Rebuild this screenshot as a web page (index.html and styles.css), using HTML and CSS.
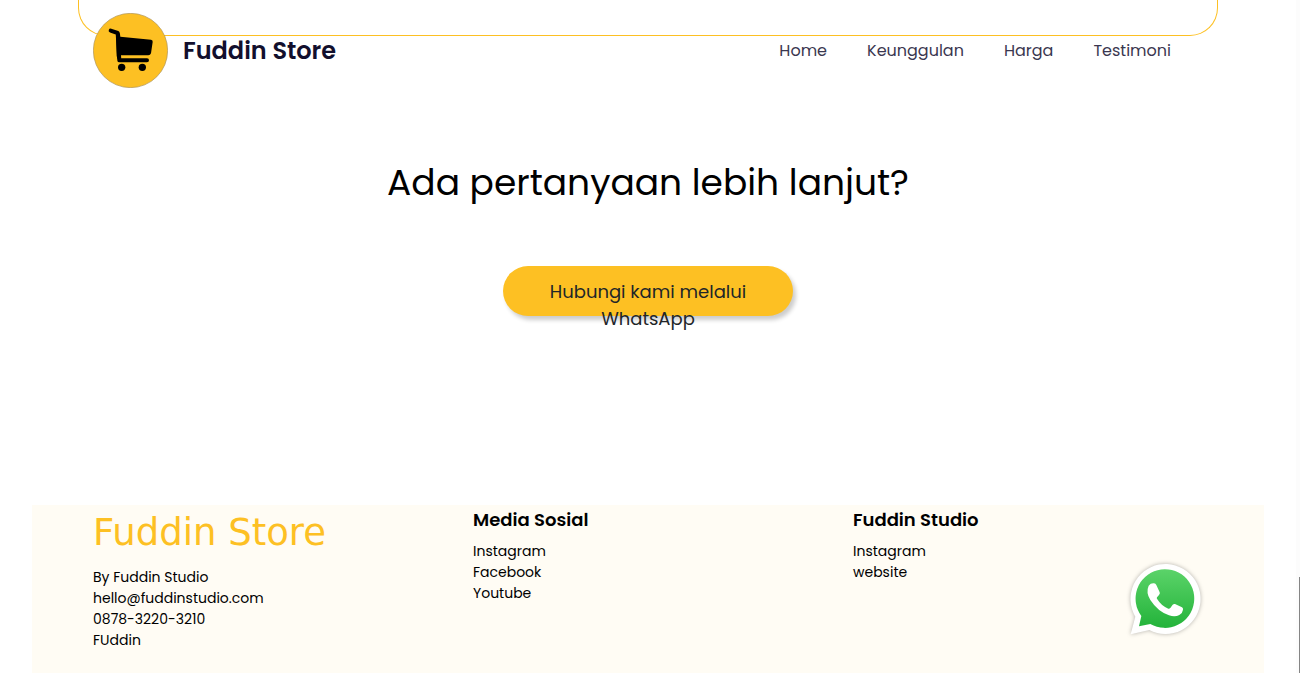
FILE: index.html
```html
<!DOCTYPE html>
<html lang="id">
<head>
<meta charset="utf-8">
<meta name="viewport" content="width=device-width, initial-scale=1">
<title>Fuddin Store</title>
<link rel="stylesheet" href="styles.css">
</head>
<body>
<div class="page">
  <header class="site-header">
    <a class="brand" href="#home">
      <svg class="brand-logo" viewBox="69 39 225 225" aria-hidden="true">
        <circle cx="181.500" cy="151.500" r="111.500" fill="#fdc023" stroke="#a9915a" stroke-width="2"/>
        <path d="M122 92L143 99L148 181H231" fill="none" stroke="#000" stroke-width="12" stroke-linecap="round" stroke-linejoin="round"/>
        <path d="M138 96Q149 94 150 103L151 110L243 119Q249 120 248 126L243 160Q241 166 235 166H153V178H143L140 168Z" fill="#000"/>
        <circle cx="155" cy="202" r="11"/>
        <circle cx="217" cy="202" r="11"/>
      </svg>
      <span class="brand-name">Fuddin Store</span>
    </a>
    <nav class="nav">
      <a href="#home">Home</a>
      <a href="#keunggulan">Keunggulan</a>
      <a href="#harga">Harga</a>
      <a href="#testimoni">Testimoni</a>
    </nav>
  </header>
  <div class="panel-end"></div>
  <main class="contact">
    <h1 class="contact-title">Ada pertanyaan lebih lanjut?</h1>
    <a class="contact-button" href="#whatsapp">Hubungi kami melalui WhatsApp</a>
  </main>
  <footer class="footer">
    <div class="footer-columns">
      <section class="column">
        <h2 class="footer-brand">Fuddin Store</h2>
        <p>By Fuddin Studio</p>
        <p>hello@fuddinstudio.com</p>
        <p>0878-3220-3210</p>
        <p>FUddin</p>
      </section>
      <section class="column">
        <h2 class="column-title">Media Sosial</h2>
        <a href="#instagram">Instagram</a>
        <a href="#facebook">Facebook</a>
        <a href="#youtube">Youtube</a>
      </section>
      <section class="column">
        <h2 class="column-title">Fuddin Studio</h2>
        <a href="#studio-instagram">Instagram</a>
        <a href="#website">website</a>
      </section>
    </div>
  </footer>
</div>
<div class="scroll-track"><div class="scroll-thumb"></div></div>
<a class="whatsapp" href="#whatsapp" aria-label="WhatsApp">
  <svg viewBox="57 35 225 225" aria-hidden="true">
    <defs>
      <linearGradient id="green" x1="0" y1="0" x2="0" y2="1">
        <stop offset="0" stop-color="#5bd369"/>
        <stop offset="1" stop-color="#23b33a"/>
      </linearGradient>
    </defs>
    <path class="bubble" d="M62 252L76 199A105 105 0 1 1 118 239Z" fill="#fff"/>
    <path d="M87 228L94 197A88 88 0 1 1 121 221Z" fill="url(#green)"/>
    <path d="M116 106Q122 98 132 99Q137 99 139 104L149 126Q151 130 147 134L141 141Q139 144 142 147Q154 167 175 175Q178 176 181 173L188 163Q191 160 195 161L216 171Q220 173 219 178Q218 188 208 194Q195 201 177 195Q144 184 121 149Q107 126 116 106Z" fill="#fff"/>
  </svg>
</a>
</body>
</html>
```
FILE: styles.css
```css
* {
  box-sizing: border-box;
}

body {
  margin: 0;
  min-height: 100vh;
  display: flex;
  background: #fff;
  color: #000;
  font-family: Poppins, Inter, sans-serif;
  font-size: 14px;
  line-height: 21px;
}

a {
  color: inherit;
  text-decoration: none;
}

h1, h2, p {
  margin: 0;
  font-weight: 400;
}

.page {
  position: relative;
  flex: 1;
  display: flex;
  flex-direction: column;
}

.site-header {
  position: absolute;
  inset: 0 0 auto;
  width: 100%;
  max-width: 1140px;
  margin: 0 auto;
  padding: 13px 47px 13px 15px;
  display: flex;
  align-items: center;
  justify-content: space-between;
  color: #120f2d;
}

.brand {
  display: flex;
  align-items: center;
  gap: 15px;
}

.brand-logo {
  width: 75px;
  height: 75px;
}

.brand-name {
  font-size: 24px;
  font-weight: 600;
  line-height: 36px;
}

.nav {
  display: flex;
  gap: 40px;
  font-size: 16px;
  line-height: 24px;
  color: #3a3750;
}

.panel-end {
  width: 100%;
  max-width: 1140px;
  height: 36px;
  margin: 0 auto;
  border: 1px solid #fdc023;
  border-top: 0;
  border-radius: 0 0 28px 28px;
}

.contact {
  flex: 1;
  padding: 119px 16px 189px;
  display: flex;
  flex-direction: column;
  align-items: center;
  gap: 55px;
  text-align: center;
}

.contact-title {
  font-size: 36px;
  line-height: 56px;
}

.contact-button {
  width: 290px;
  height: 50px;
  padding: 12px 40px;
  border-radius: 25px;
  background: #fdc023;
  box-shadow: 3px 4px 4px rgba(0, 0, 0, 0.2);
  color: #212529;
  font-size: 18px;
  line-height: 27px;
}

.footer {
  margin: 0 32px;
  min-height: 168px;
  padding-top: 1px;
  background: #fffcf4;
}

.footer-columns {
  max-width: 1140px;
  margin: 0 auto;
  display: grid;
  grid-template-columns: repeat(3, 1fr);
}

.column {
  display: flex;
  flex-direction: column;
  padding: 0 15px;
}

.footer-brand {
  margin-bottom: 7px;
  color: #fdc023;
  font-family: Verdana, "DejaVu Sans", sans-serif;
  font-size: 37px;
  line-height: 54px;
}

.column-title {
  margin-bottom: 8px;
  font-size: 18px;
  font-weight: 600;
  line-height: 27px;
}

.scroll-track {
  width: 4px;
  padding-left: 3px;
  background: #fcfcfc;
  display: flex;
  flex-direction: column;
  justify-content: flex-end;
}

.scroll-thumb {
  height: 96px;
  background: #858585;
}

.whatsapp {
  position: fixed;
  right: 96px;
  bottom: 36px;
  width: 75px;
  height: 75px;
}

.whatsapp svg {
  display: block;
  overflow: visible;
}

.bubble {
  filter: drop-shadow(0 0 6px rgba(0, 0, 0, 0.3));
}
```
